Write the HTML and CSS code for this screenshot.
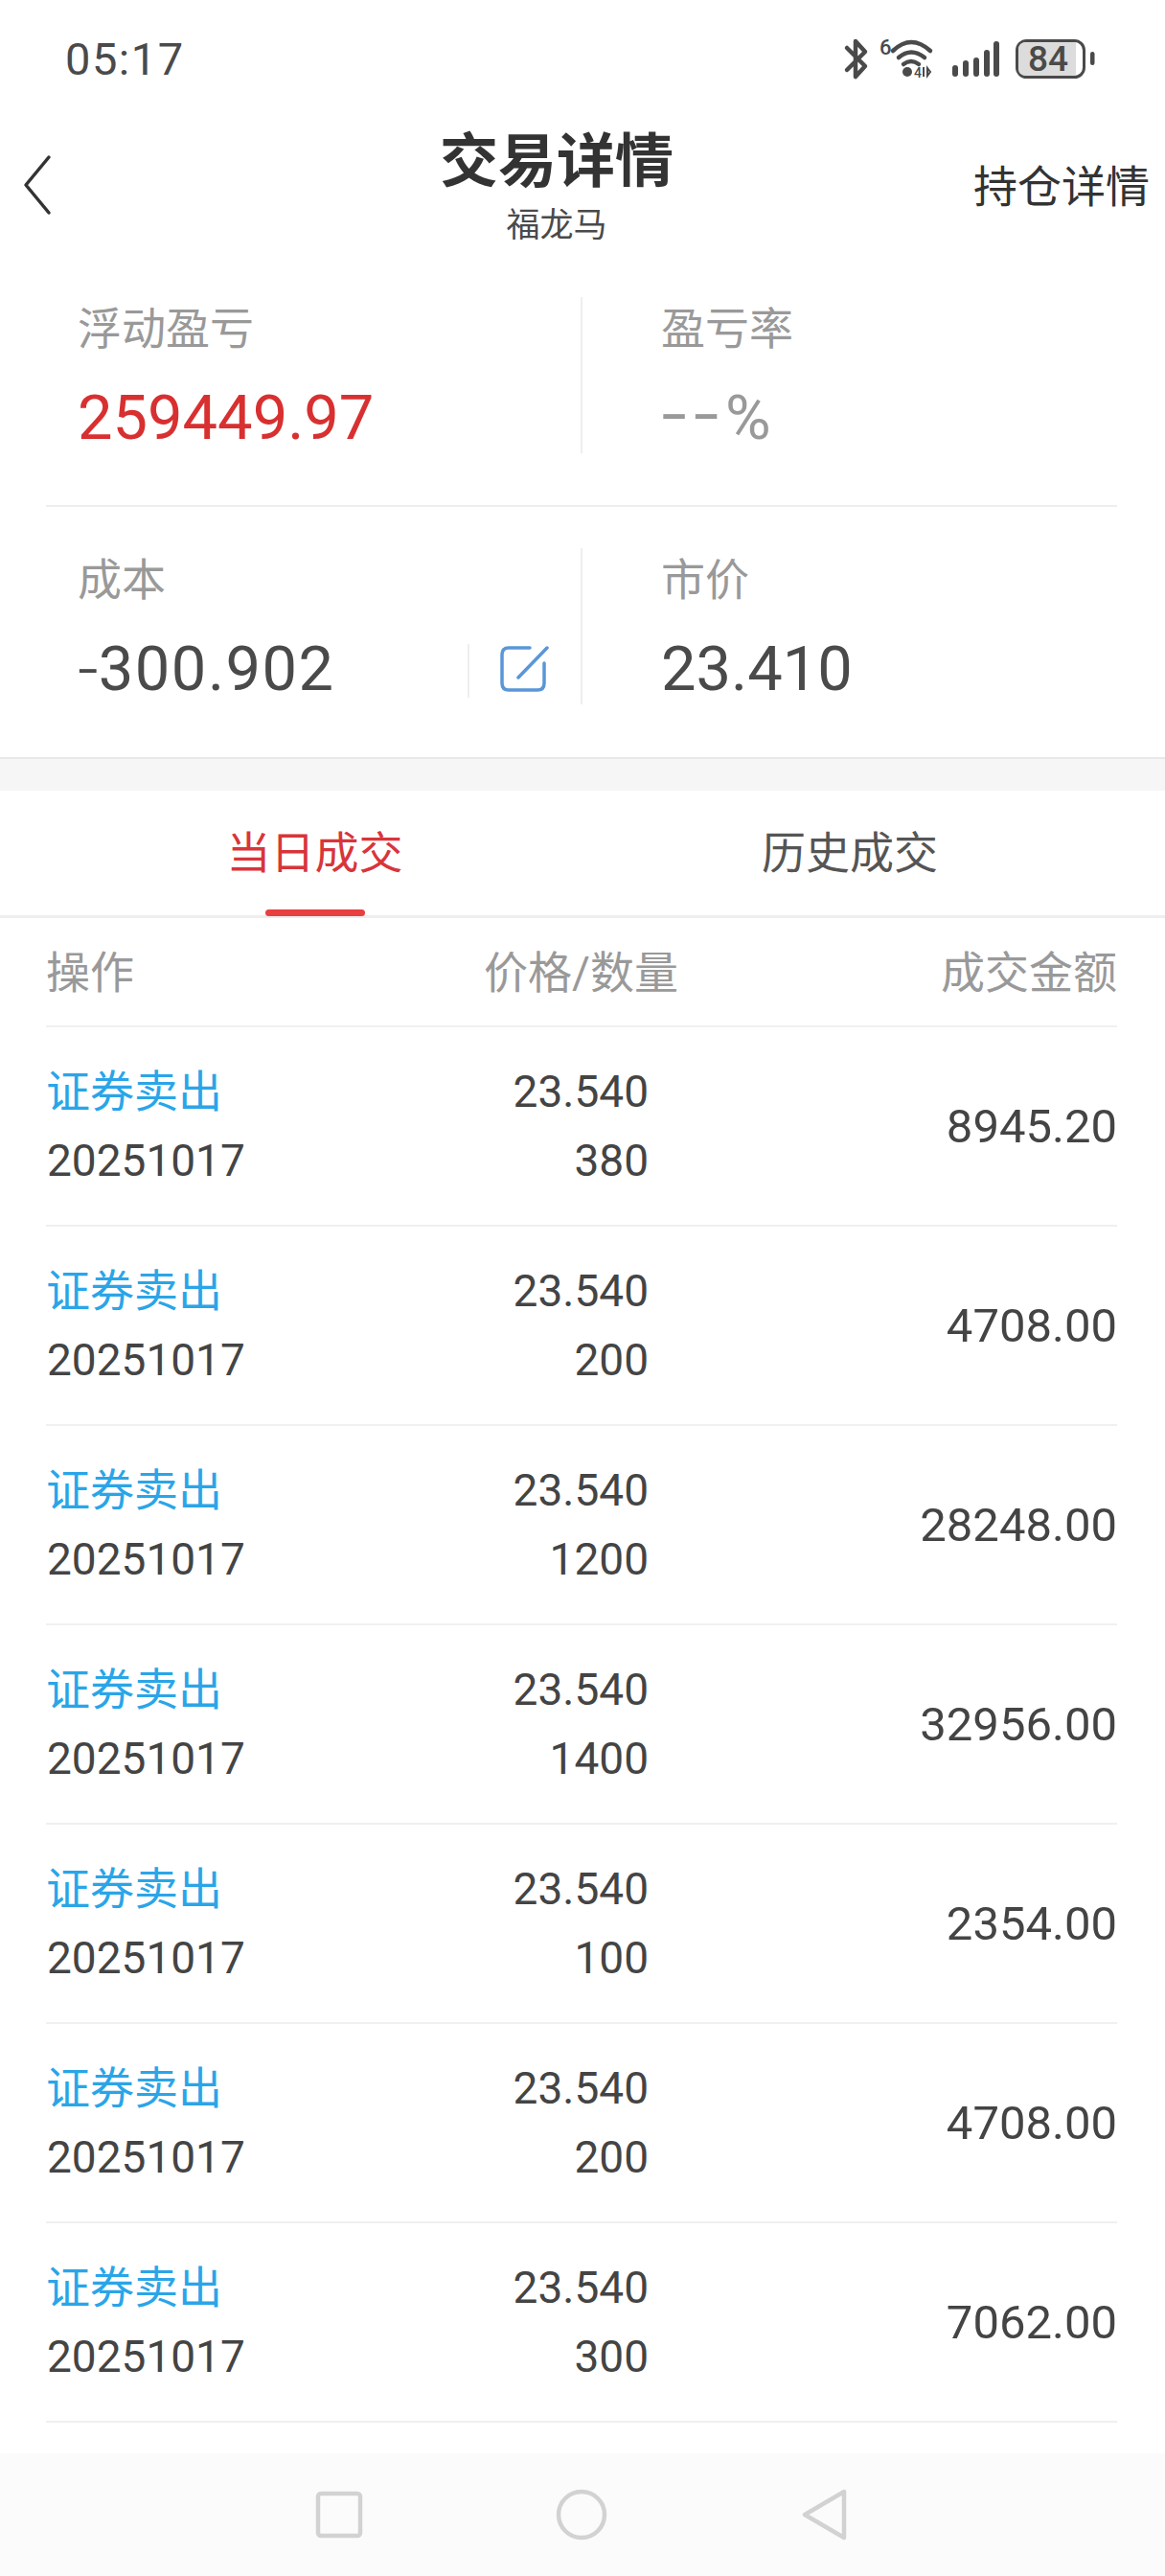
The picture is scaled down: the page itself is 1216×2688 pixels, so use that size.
FILE: index.html
```html
<!DOCTYPE html>
<html lang="zh-CN">
<head>
    <meta charset="UTF-8">
    <meta name="viewport" content="width=device-width, initial-scale=1.0">
    <title>交易详情</title>
    <link rel="stylesheet" href="styles.css">
</head>
<body>
    <div class="page">
        <div class="status-bar">
            <span class="status-time">05:17</span>
            <svg class="status-icons" width="270" height="60" viewBox="880 30 270 60">
                <path d="M884 50 L903 69 L893 80 L893 43 L903 54 L884 73" fill="none" stroke="#4a4a4a" stroke-width="4.5" stroke-linecap="round" stroke-linejoin="round"/>
                <text x="918" y="57" class="status-small">6</text>
                <path d="M932 53 Q951 35 971 53" fill="none" stroke="#4a4a4a" stroke-width="4.5" stroke-linecap="round"/>
                <path d="M938 60 Q951 49 965 60" fill="none" stroke="#4a4a4a" stroke-width="4.5" stroke-linecap="round"/>
                <path d="M943 67 Q951 61 959 67" fill="none" stroke="#4a4a4a" stroke-width="4.5" stroke-linecap="round"/>
                <circle cx="947" cy="75" r="5" fill="#4a4a4a"/>
                <text x="954" y="81" class="status-tiny">4</text>
                <path d="M964 70 L964 80 M968 71 L971 75 L968 79 Z" fill="none" stroke="#4a4a4a" stroke-width="2"/>
                <g stroke="#4a4a4a" stroke-width="6" stroke-linecap="round">
                    <path d="M997 71 V77"/>
                    <path d="M1008 66 V77"/>
                    <path d="M1019 63 V77"/>
                    <path d="M1030 55 V77"/>
                    <path d="M1040 46 V77"/>
                </g>
                <rect x="1061.5" y="42.5" width="70" height="38" rx="10" fill="#fff" stroke="#4a4a4a" stroke-width="3"/>
                <path d="M1071 44 H1123 V79 H1071 Q1063 79 1063 71 V52 Q1063 44 1071 44 Z" fill="#dcdcdc"/>
                <text x="1094" y="74" class="status-batt">84</text>
                <rect x="1138" y="54" width="4.5" height="14" rx="2.2" fill="#4a4a4a"/>
            </svg>
        </div>

        <div class="top-nav">
            <div class="nav-left">
                <svg width="34" height="64" viewBox="0 0 34 64">
                    <path d="M29 3 L5 32 L29 61" fill="none" stroke="#333" stroke-width="3.5" stroke-linecap="round" stroke-linejoin="round"/>
                </svg>
            </div>
            <div class="nav-center">
                <div class="nav-title">交易详情</div>
                <div class="nav-sub">福龙马</div>
            </div>
            <div class="nav-right">持仓详情</div>
        </div>

        <div class="stats">
            <div class="stat-row stat-row-first">
                <div class="stat">
                    <div class="stat-label">浮动盈亏</div>
                    <div class="stat-value red">259449.97</div>
                </div>
                <div class="stat stat-right">
                    <div class="stat-label">盈亏率</div>
                    <div class="stat-value muted"><span class="dash">--</span>%</div>
                </div>
            </div>
            <div class="stat-row">
                <div class="stat">
                    <div class="stat-label">成本</div>
                    <div class="stat-value stat-cost"><span class="dash dash-minus">-</span>300.902</div>
                    <div class="edit-box">
                        <svg width="52" height="52" viewBox="0 0 52 52">
                            <path d="M32 4 H10 Q3 4 3 11 V41 Q3 48 10 48 H40 Q47 48 47 41 V20" fill="none" stroke="#5a96d8" stroke-width="3.5" stroke-linecap="round"/>
                            <path d="M20 35 L50 4" fill="none" stroke="#5a96d8" stroke-width="3.5" stroke-linecap="round"/>
                        </svg>
                    </div>
                </div>
                <div class="stat stat-right">
                    <div class="stat-label">市价</div>
                    <div class="stat-value">23.410</div>
                </div>
            </div>
        </div>

        <div class="gap"></div>

        <div class="tabs">
            <div class="tab tab-active">当日成交</div>
            <div class="tab tab-history">历史成交</div>
        </div>

        <div class="table">
            <div class="table-head">
                <div>操作</div>
                <div class="head-mid">价格/数量</div>
                <div class="num">成交金额</div>
            </div>
            <div class="trade">
                <div><div class="op">证券卖出</div><div>20251017</div></div>
                <div class="num"><div>23.540</div><div>380</div></div>
                <div class="num amount">8945.20</div>
            </div>
            <div class="trade">
                <div><div class="op">证券卖出</div><div>20251017</div></div>
                <div class="num"><div>23.540</div><div>200</div></div>
                <div class="num amount">4708.00</div>
            </div>
            <div class="trade">
                <div><div class="op">证券卖出</div><div>20251017</div></div>
                <div class="num"><div>23.540</div><div>1200</div></div>
                <div class="num amount">28248.00</div>
            </div>
            <div class="trade">
                <div><div class="op">证券卖出</div><div>20251017</div></div>
                <div class="num"><div>23.540</div><div>1400</div></div>
                <div class="num amount">32956.00</div>
            </div>
            <div class="trade">
                <div><div class="op">证券卖出</div><div>20251017</div></div>
                <div class="num"><div>23.540</div><div>100</div></div>
                <div class="num amount">2354.00</div>
            </div>
            <div class="trade">
                <div><div class="op">证券卖出</div><div>20251017</div></div>
                <div class="num"><div>23.540</div><div>200</div></div>
                <div class="num amount">4708.00</div>
            </div>
            <div class="trade">
                <div><div class="op">证券卖出</div><div>20251017</div></div>
                <div class="num"><div>23.540</div><div>300</div></div>
                <div class="num amount">7062.00</div>
            </div>
        </div>

        <div class="sys-nav">
            <svg class="sys-square" width="50" height="50" viewBox="0 0 50 50">
                <rect x="3" y="3" width="44" height="44" rx="3" fill="none" stroke="#d2d2d2" stroke-width="4.5"/>
            </svg>
            <svg class="sys-circle" width="54" height="54" viewBox="0 0 54 54">
                <circle cx="27" cy="27" r="24" fill="none" stroke="#d2d2d2" stroke-width="4.5"/>
            </svg>
            <svg class="sys-back" width="48" height="54" viewBox="0 0 48 54">
                <path d="M44 3 L44 51 L3 27 Z" fill="none" stroke="#d2d2d2" stroke-width="4.5" stroke-linejoin="round"/>
            </svg>
        </div>
    </div>
</body>
</html>
```

FILE: styles.css
```css
* {
    box-sizing: border-box;
}
html, body {
    margin: 0;
    padding: 0;
    background: #fff;
}
body {
    font-family: Roboto, "Noto Sans CJK SC", sans-serif;
    color: #4a4a4a;
}
.page {
    width: 1216px;
    height: 2688px;
    display: flex;
    flex-direction: column;
    overflow: hidden;
}
.status-bar {
    height: 105px;
    padding: 30px 0 0 68px;
    display: flex;
    align-items: flex-start;
    justify-content: space-between;
}
.status-time {
    font-size: 47px;
    line-height: 64px;
    letter-spacing: 1.5px;
}
.status-icons {
    margin-right: 66px;
}
.status-small {
    font: 500 22px Roboto, sans-serif;
    fill: #4a4a4a;
}
.status-tiny {
    font: 500 14px Roboto, sans-serif;
    fill: #4a4a4a;
}
.status-batt {
    font: 500 37px Roboto, sans-serif;
    fill: #4a4a4a;
    text-anchor: middle;
}
.top-nav {
    height: 157px;
    display: grid;
    grid-template-columns: 1fr auto 1fr;
    align-items: start;
}
.nav-left {
    padding: 56px 0 0 22px;
}
.nav-center {
    text-align: center;
    margin-right: 54px;
}
.nav-title {
    font-size: 61px;
    font-weight: 700;
    line-height: 84px;
    color: #333;
    margin-top: 22px;
}
.nav-sub {
    font-size: 35px;
    line-height: 48px;
    color: #4a4a4a;
    margin-top: 1px;
}
.nav-right {
    font-size: 46px;
    line-height: 60px;
    color: #333;
    text-align: right;
    padding: 60px 16px 0 0;
}
.stats {
    height: 528px;
    padding: 48px 50px 0 48px;
}
.stat-row {
    display: grid;
    grid-template-columns: 560px 1fr;
    height: 215px;
}
.stat-row-first {
    margin-bottom: 47px;
    position: relative;
}
.stat-row-first::after {
    content: "";
    position: absolute;
    left: 0;
    right: 0;
    bottom: -4px;
    height: 2px;
    background: #eee;
}
.stat {
    position: relative;
    padding-left: 33px;
    height: 163px;
    border-right: 2px solid #eee;
}
.stat-right {
    padding-left: 82px;
    border-right: 0;
}
.stat-label {
    font-size: 46px;
    line-height: 64px;
    color: #999;
    margin-top: 1px;
}
.stat-value {
    font-size: 65px;
    line-height: 84px;
    margin-top: 19px;
}
.stat-cost {
    letter-spacing: 1.5px;
}
.dash {
    font-size: 96px;
    font-weight: 300;
    line-height: 0;
    letter-spacing: 6px;
    vertical-align: -7px;
}
.dash-minus {
    font-size: 76px;
    letter-spacing: 0;
    vertical-align: -4px;
}
.red {
    color: #d83030;
}
.muted {
    color: #999;
}
.edit-box {
    position: absolute;
    top: 100px;
    left: 440px;
    width: 90px;
    height: 56px;
    padding-left: 31px;
    border-left: 2px solid #eee;
}
.gap {
    height: 35px;
    background: #f6f6f6;
    border-top: 2px solid #e8e8e8;
}
.tabs {
    height: 133px;
    display: grid;
    grid-template-columns: 657px 1fr;
    border-bottom: 3px solid #eee;
}
.tab {
    font-size: 46px;
    line-height: 130px;
    color: #555;
    position: relative;
    text-align: center;
}
.tab-history {
    padding-right: 99px;
}
.tab-active {
    color: #d8353a;
}
.tab-active::after {
    content: "";
    position: absolute;
    left: 50%;
    bottom: -1px;
    width: 104px;
    height: 7px;
    margin-left: -52px;
    border-radius: 4px;
    background: #e8403f;
}
.table {
    flex: 1;
    padding: 0 50px 0 48px;
}
.table-head {
    height: 114px;
    display: grid;
    grid-template-columns: 400px 260px 1fr;
    align-items: center;
    padding-bottom: 6px;
    font-size: 46px;
    color: #999;
    border-bottom: 2px solid #f0f0f0;
}
.head-mid {
    text-align: right;
}
.num {
    text-align: right;
}
.trade {
    height: 208px;
    display: grid;
    grid-template-columns: 400px 229px 1fr;
    align-items: center;
    font-size: 46px;
    line-height: 72px;
    color: #444;
    border-bottom: 2px solid #f0f0f0;
}
.trade > div:first-child {
    padding-left: 1px;
}
.op {
    color: #2aa5e8;
    margin-left: -1px;
}
.amount {
    font-size: 49px;
    padding-top: 2px;
}
.sys-nav {
    height: 128px;
    background: #fbfbfb;
    display: flex;
    align-items: center;
    padding-left: 329px;
    flex-shrink: 0;
}
.sys-circle {
    margin-left: 201px;
}
.sys-back {
    margin-left: 203px;
}
```
